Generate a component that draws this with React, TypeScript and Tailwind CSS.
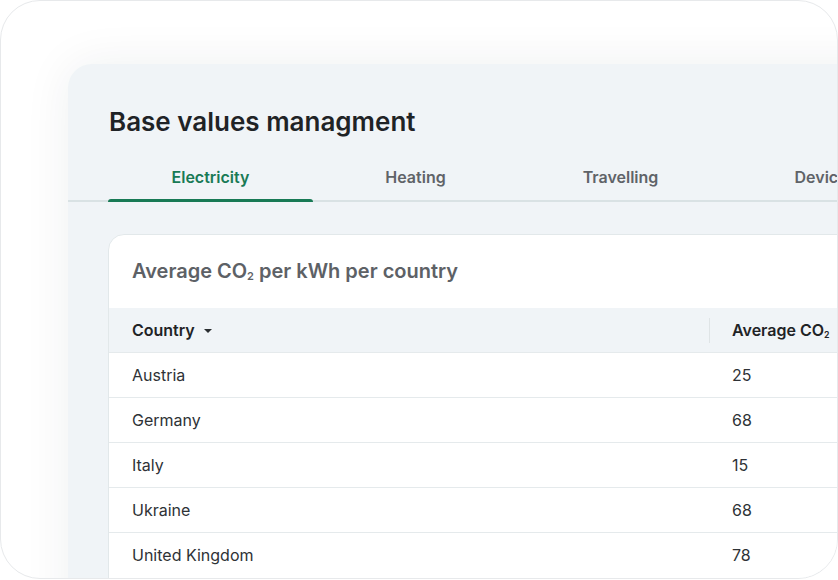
import React from "react";

const rows = [
  { country: "Austria", value: 25 },
  { country: "Germany", value: 68 },
  { country: "Italy", value: 15 },
  { country: "Ukraine", value: 68 },
  { country: "United Kingdom", value: 78 },
];

const tabs = ["Electricity", "Heating", "Travelling", "Devices"];

function Co2() {
  return (
    <>
      CO<sub className="text-[0.55em] bottom-[-0.2em]">2</sub>
    </>
  );
}

export default function App() {
  return (
    <div
      className="w-[838px] h-[580px] bg-white overflow-hidden"
      style={{ fontFamily: "Inter, 'Liberation Sans', sans-serif" }}
    >
      <div className="h-[579px] rounded-[40px] border border-[#e7e9eb] overflow-hidden pl-[67px] pt-[63px] bg-white">
        <div className="w-[900px] h-[600px] bg-[#f0f4f7] rounded-tl-[24px] shadow-[0_0_48px_rgba(20,40,60,0.07)] pt-[42px]">
          <h1 className="pl-[41px] text-[26px] leading-[32px] font-semibold text-[#1f2326]">
            Base values managment
          </h1>

          <div className="mt-4 flex border-b-2 border-[#d9e2e4]">
            <div className="w-[40px]" />
            {tabs.map((t, i) => (
              <div
                key={t}
                className="relative w-[205px] h-[46px] flex items-center justify-center shrink-0"
              >
                <span
                  className={
                    "text-[16px] font-semibold " +
                    (i === 0 ? "text-[#187a55]" : "text-[#5f6368]")
                  }
                >
                  {t}
                </span>
                {i === 0 && (
                  <span className="absolute left-0 right-0 bottom-[-2px] h-[3px] rounded-t-[3px] bg-[#187a55]" />
                )}
              </div>
            ))}
          </div>

          <div className="ml-[40px] mt-[32px] h-[420px] bg-white border border-[#e2e8ea] rounded-[16px] overflow-hidden">
            <div className="pl-[23px] pt-[22px] pb-[23px] text-[20px] leading-[28px] font-semibold text-[#5d6166]">
              Average <Co2 /> per kWh per country
            </div>

            <div className="flex h-[44px] bg-[#f0f4f7] items-center text-[16px] font-semibold text-[#1f2326]">
              <div className="w-[600px] pl-[23px] flex items-center gap-2">
                Country
                <svg width="10" height="6" viewBox="0 0 10 6" className="mt-[1px]">
                  <path d="M1 1h8L5 5z" fill="#2a2e31" />
                </svg>
              </div>
              <div className="w-px h-[25px] bg-[#dfe4e6]" />
              <div className="pl-[22px]">
                Average <Co2 />
              </div>
            </div>

            {rows.map((r) => (
              <div
                key={r.country}
                className="flex h-[45px] items-center border-t border-[#e5eaec] text-[16px] text-[#2e3236]"
              >
                <div className="w-[601px] pl-[23px]">{r.country}</div>
                <div className="pl-[22px]">{r.value}</div>
              </div>
            ))}
          </div>
        </div>
      </div>
    </div>
  );
}
